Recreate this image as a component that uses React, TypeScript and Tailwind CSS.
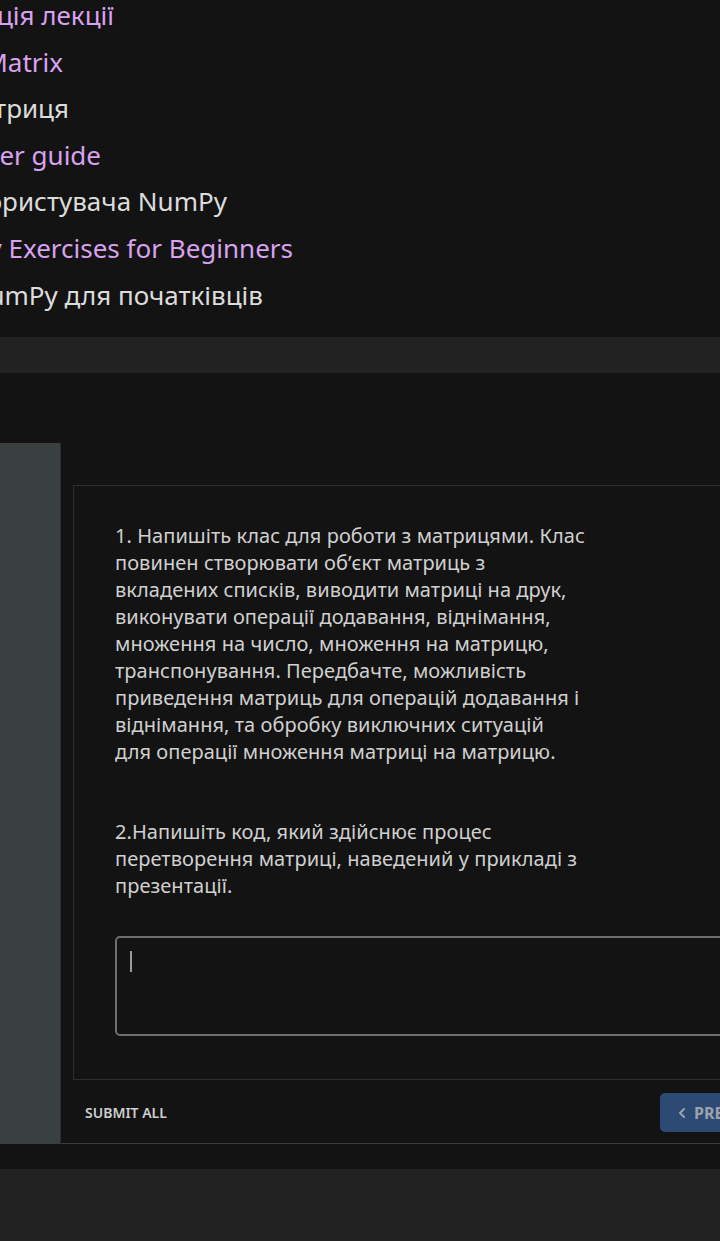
import { ChevronLeft } from 'lucide-react'

// right edges of each line as seen in the scrolled view
const links = [
  { text: 'Презентація лекції', link: true, w: 'w-[114px]' },
  { text: 'NumPy Matrix', link: true, w: 'w-[63px]' },
  { text: 'NumPy матриця', link: false, w: 'w-[69px]' },
  { text: 'NumPy user guide', link: true, w: 'w-[101px]' },
  { text: 'Посібник користувача NumPy', link: false, w: 'w-[227px]' },
  { text: 'NumPy Exercises for Beginners', link: true, w: 'w-[293px]' },
  { text: 'Вправи NumPy для початківців', link: false, w: 'w-[263px]' },
]

export default function App() {
  return (
    <div className="w-[720px] h-[1241px] overflow-hidden bg-[#131313] font-['Noto_Sans',sans-serif]">
      {/* resource list, scrolled to the side */}
      <div className="-mt-[8px] text-[26px] leading-[46.6px]">
        {links.map((l) => (
          <div key={l.text} className={`flex justify-end ${l.w}`}>
            <span className={`shrink-0 whitespace-nowrap ${l.link ? 'text-[#d9a2f0]' : 'text-[#dcdcdc]'}`}>
              {l.text}
            </span>
          </div>
        ))}
      </div>

      <div className="mt-[19px] h-[36px] w-[720px] bg-[#222222]" />

      <div className="mt-[70px] flex w-[1000px]">
        <div className="w-[61px] shrink-0 bg-[#3a3f40] border-r border-[#2a2e2f]" />

        <div className="flex-1 border-b border-[#3c3c3c]">
          <div className="ml-[12px] mt-[42px] border border-[#2e2e2e] pl-[41px] pt-[36px] pb-[43px]">
            <div className="w-[470px] text-[20px] leading-[27px] tracking-[0.05px] text-[#d0d0d0]">
              <p>
                1. Напишіть клас для роботи з матрицями. Клас повинен створювати об’єкт матриць з
                вкладених списків, виводити матриці на друк, виконувати операції додавання,
                віднімання, множення на число, множення на матрицю, транспонування. Передбачте,
                можливість приведення матриць для операцій додавання і віднімання, та обробку
                виключних ситуацій для операції множення матриці на матрицю.
              </p>
              <p className="mt-[53px]">
                2.Напишіть код, який здійснює процес перетворення матриці, наведений у прикладі з
                презентації.
              </p>
            </div>
            <div className="mt-[37px] h-[100px] w-[800px] rounded-[5px] border-2 border-[#6e6e6e] pl-[13px] pt-[13px]">
              <div className="h-[21px] w-[2px] bg-[#9a9a9a]" />
            </div>
          </div>

          <div className="flex items-center pl-[24px] pt-[13px] pb-[11px]">
            <span className="w-[575px] text-[14px] font-semibold uppercase text-[#cfcfcf]">
              Submit all
            </span>
            <button className="flex h-[39px] items-center gap-[4px] rounded-[5px] bg-[#2d4a74] pl-[14px] pr-[16px] text-[16px] font-bold text-[#9da3ab]">
              <ChevronLeft size={16} strokeWidth={3} />
              PREVIOUS
            </button>
          </div>
        </div>
      </div>

      <div className="mt-[25px] h-[80px] w-[720px] bg-[#222222]" />
    </div>
  )
}
